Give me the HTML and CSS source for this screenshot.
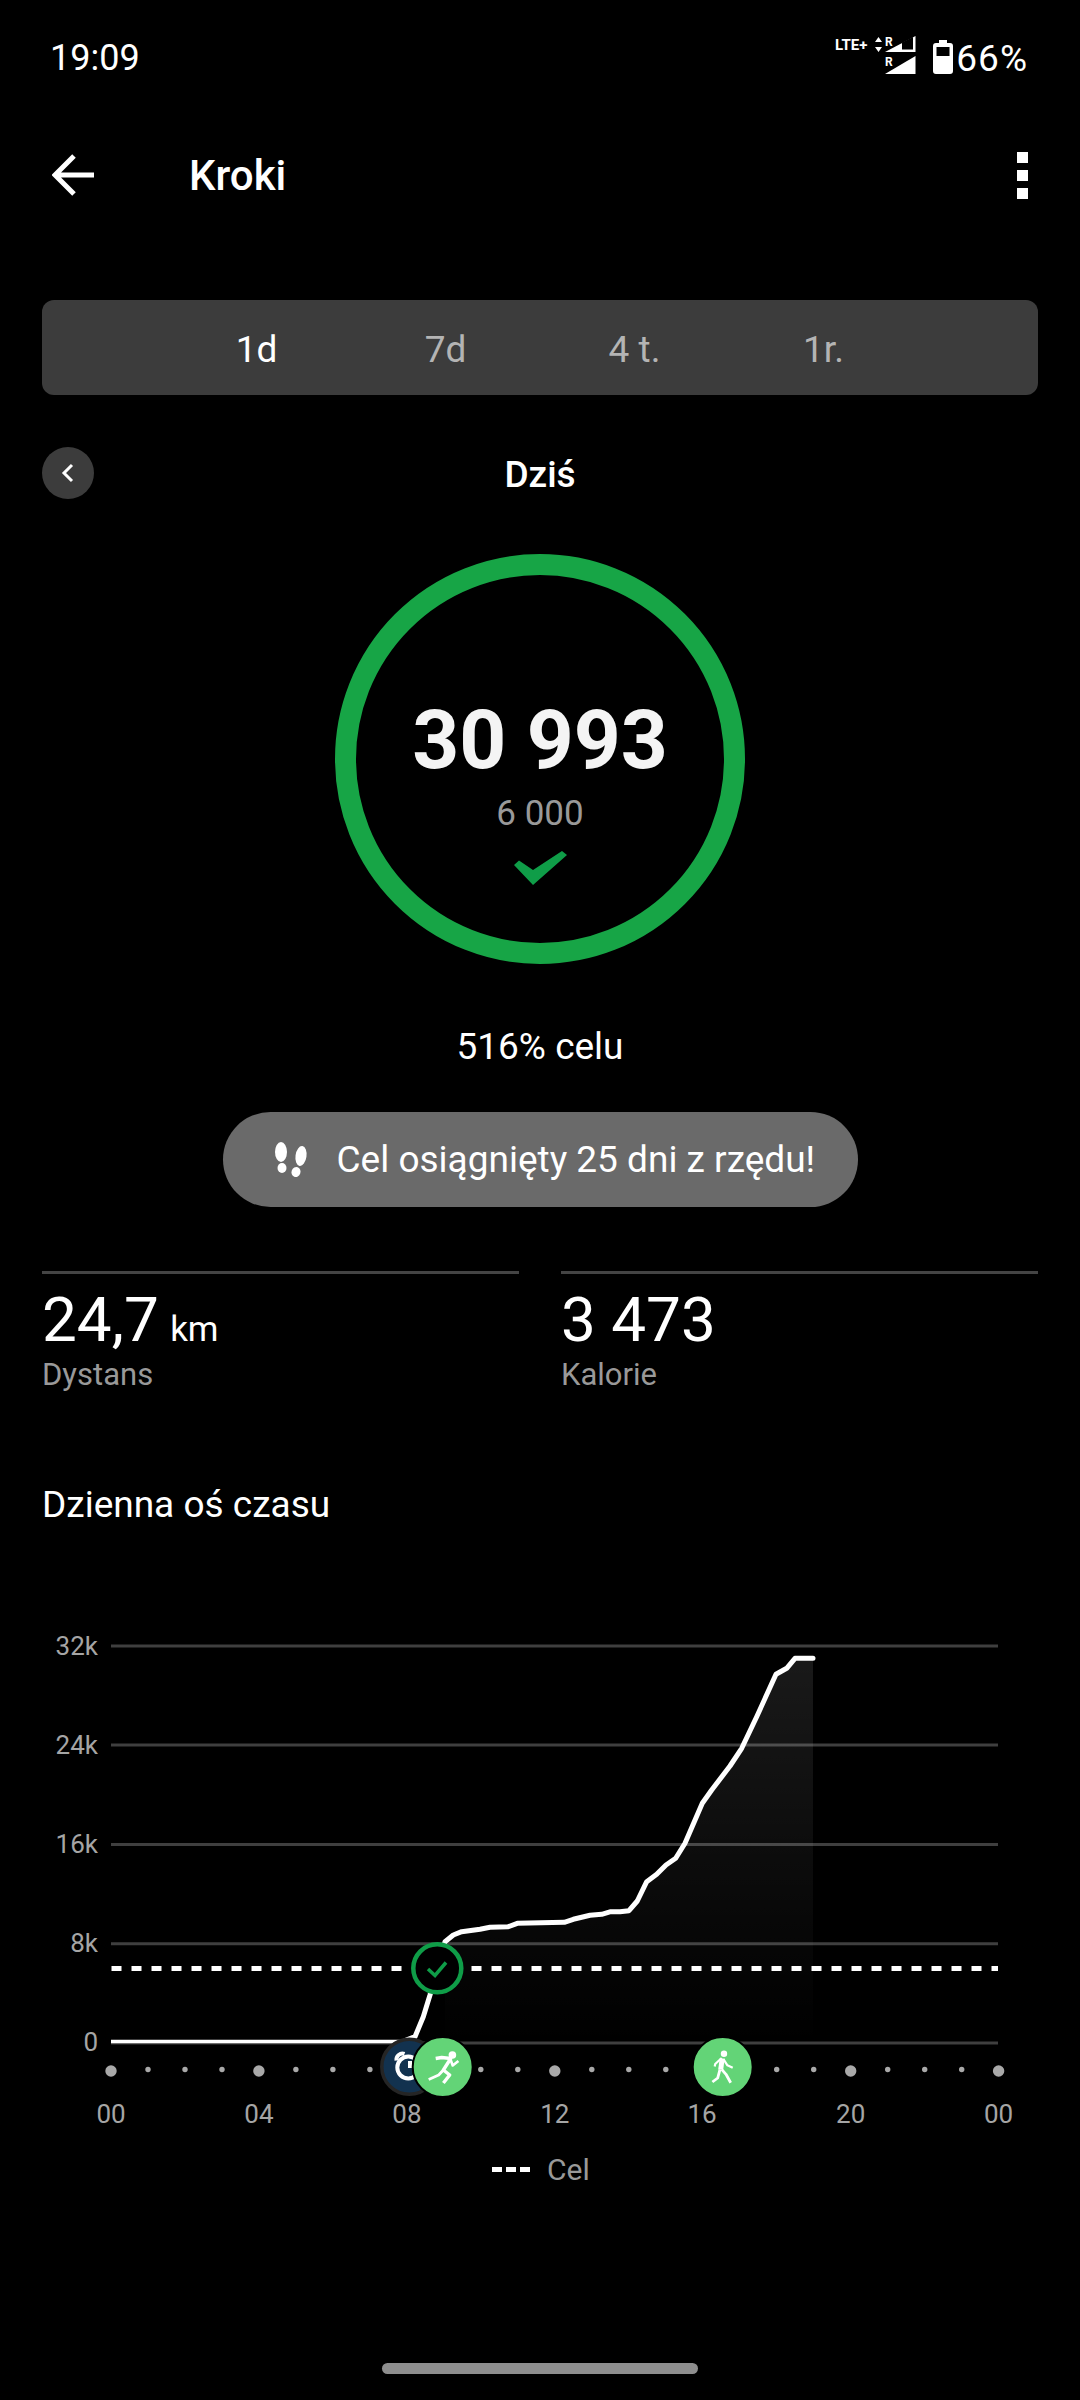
FILE: index.html
```html
<!DOCTYPE html>
<html lang="pl">
<head>
    <meta charset="UTF-8">
    <meta name="viewport" content="width=device-width, initial-scale=1.0">
    <title>Kroki</title>
    <link rel="stylesheet" href="styles.css">
</head>
<body>
    <div class="status-bar">
        <span class="clock">19:09</span>
        <div class="status-icons">
            <svg class="signal" width="84" height="40" viewBox="830 38 84 40">
                <text class="signal-text" x="832" y="52">LTE+</text>
                <path d="M875.5 39l3.5 5h-7zM875.5 54l3.5-5h-7z" fill="#fff"/>
                <text class="signal-small" x="882" y="48">R</text>
                <path d="M882 54l30.5-16v16z" fill="#fff"/>
                <path d="M899 51.5v-7l11-5.5v12.500z" fill="#000"/>
                <text class="signal-small" x="882" y="68">R</text>
                <path d="M882 76l30.500-18v18z" fill="#fff"/>
            </svg>
            <svg class="battery" width="20" height="34" viewBox="0 0 20 34">
                <path d="M6 0h8v3h3a3 3 0 0 1 3 3v25a3 3 0 0 1-3 3H3a3 3 0 0 1-3-3V6a3 3 0 0 1 3-3h3z" fill="#fff"/>
                <rect x="3.500" y="7" width="13" height="9" fill="#000"/>
            </svg>
            <span class="battery-level">66%</span>
        </div>
    </div>

    <div class="toolbar">
        <svg width="44" height="42" viewBox="0 0 44 42">
            <path d="M22 2L3 21l19 19M3 21h39" fill="none" stroke="#fff" stroke-width="5"/>
        </svg>
        <h1 class="toolbar-title">Kroki</h1>
        <div class="more-menu">
            <span></span>
            <span></span>
            <span></span>
        </div>
    </div>

    <div class="tabs">
        <span class="tab tab-active">1d</span>
        <span class="tab">7d</span>
        <span class="tab">4 t.</span>
        <span class="tab">1r.</span>
    </div>

    <div class="date-row">
        <div class="date-prev">
            <svg width="14" height="20" viewBox="0 0 14 20">
                <path d="M11 2L3 10l8 8" fill="none" stroke="#fff" stroke-width="3"/>
            </svg>
        </div>
        <div class="date-label">Dziś</div>
    </div>

    <div class="ring">
        <div class="ring-steps">30 993</div>
        <div class="ring-goal">6 000</div>
        <svg class="ring-check" width="53" height="34" viewBox="0 0 53 34">
            <path d="M0 14l5-4.500 14 9.500L48 0l5 4-34 30z" fill="#0f9d48"/>
        </svg>
    </div>

    <div class="goal-percent">516% celu</div>

    <div class="streak">
        <svg width="36" height="40" viewBox="0 0 36 40">
            <ellipse cx="7" cy="12" rx="6" ry="10" fill="#fff"/>
            <ellipse cx="8" cy="28" rx="4.500" ry="5" fill="#fff"/>
            <ellipse cx="27" cy="16" rx="5.500" ry="10" transform="rotate(8 27 16)" fill="#fff"/>
            <ellipse cx="22" cy="32" rx="4.500" ry="5" transform="rotate(20 22 32)" fill="#fff"/>
        </svg>
        <span class="streak-text">Cel osiągnięty 25 dni z rzędu!</span>
    </div>

    <div class="stats">
        <div class="stat">
            <div class="stat-value">24,7 <small>km</small></div>
            <div class="stat-label">Dystans</div>
        </div>
        <div class="stat">
            <div class="stat-value">3 473</div>
            <div class="stat-label">Kalorie</div>
        </div>
    </div>

    <h2 class="section-title">Dzienna oś czasu</h2>

    <svg class="chart" width="1080" height="600" viewBox="0 1600 1080 600">
        <defs>
            <linearGradient id="areaFill" x1="0" y1="0" x2="0" y2="1">
                <stop offset="0" stop-color="#fff" stop-opacity="0.1"/>
                <stop offset="1" stop-color="#fff" stop-opacity="0"/>
            </linearGradient>
        </defs>

        <!-- grid -->
        <g stroke="#3f3f3f" stroke-width="3">
            <path d="M111 1646H998M111 1745H998M111 1844.500H998M111 1943.700H998M111 2043H998"/>
        </g>
        <g class="axis-label" text-anchor="end">
            <text x="98" y="1655">32k</text>
            <text x="98" y="1754">24k</text>
            <text x="98" y="1853">16k</text>
            <text x="98" y="1952">8k</text>
            <text x="98" y="2051">0</text>
        </g>

        <!-- steps area and line -->
        <path fill="url(#areaFill)" d="M445 1941.700L453.300 1935L461.700 1931.700L480 1929.300L490 1927.300L508.300 1926.700L517.300 1923.300L564.300 1922.300L573.300 1919.300L590 1915.300L601.700 1914.300L610.700 1911.700L620 1911.700L629 1910.700L637.300 1901L646.700 1881.700L656.700 1874.300L666 1865L675.700 1858.300L685 1843.300L702.300 1803.300L711.700 1790L730 1766L741.700 1748.300L756.700 1716.700L776 1674.300L786.700 1668.300L795 1658.300L813 1658.300V2043H445z"/>
        <path fill="none" stroke="#fff" stroke-width="3.500" d="M111 2041.500H405"/>
        <path fill="none" stroke="#fff" stroke-width="5" stroke-linejoin="round" stroke-linecap="round" d="M405 2040.500L415 2036.700L423.300 2016.700L430 1995L437 1968L445 1941.700L453.300 1935L461.700 1931.700L480 1929.300L490 1927.300L508.300 1926.700L517.300 1923.300L564.300 1922.300L573.300 1919.300L590 1915.300L601.700 1914.300L610.700 1911.700L620 1911.700L629 1910.700L637.300 1901L646.700 1881.700L656.700 1874.300L666 1865L675.700 1858.300L685 1843.300L702.300 1803.300L711.700 1790L730 1766L741.700 1748.300L756.700 1716.700L776 1674.300L786.700 1668.300L795 1658.300L813 1658.300"/>

        <!-- goal line -->
        <path d="M111.500 1968.500H402M471.500 1968.500H998" stroke="#fff" stroke-width="5" stroke-dasharray="10 10"/>
        <circle cx="437.300" cy="1968.300" r="24" fill="#000" stroke="#0f9d48" stroke-width="4.500"/>
        <path d="M428 1969l7 6.500 11-13" fill="none" stroke="#0f9d48" stroke-width="3.500"/>

        <!-- hour dots -->
        <g fill="#a9a9a9">
            <circle cx="111" cy="2071" r="5.700"/>
            <circle cx="148" cy="2069.500" r="2.700"/>
            <circle cx="185" cy="2069.500" r="2.700"/>
            <circle cx="222" cy="2069.500" r="2.700"/>
            <circle cx="258.900" cy="2071" r="5.700"/>
            <circle cx="295.900" cy="2069.500" r="2.700"/>
            <circle cx="332.900" cy="2069.500" r="2.700"/>
            <circle cx="369.900" cy="2069.500" r="2.700"/>
            <circle cx="480.800" cy="2069.500" r="2.700"/>
            <circle cx="517.800" cy="2069.500" r="2.700"/>
            <circle cx="554.800" cy="2071" r="5.700"/>
            <circle cx="591.800" cy="2069.500" r="2.700"/>
            <circle cx="628.800" cy="2069.500" r="2.700"/>
            <circle cx="665.800" cy="2069.500" r="2.700"/>
            <circle cx="776.700" cy="2069.500" r="2.700"/>
            <circle cx="813.700" cy="2069.500" r="2.700"/>
            <circle cx="850.700" cy="2071" r="5.700"/>
            <circle cx="887.700" cy="2069.500" r="2.700"/>
            <circle cx="924.700" cy="2069.500" r="2.700"/>
            <circle cx="961.700" cy="2069.500" r="2.700"/>
            <circle cx="998.600" cy="2071" r="5.700"/>
        </g>
        <g class="axis-label" text-anchor="middle">
            <text x="111" y="2123">00</text>
            <text x="258.900" y="2123">04</text>
            <text x="406.900" y="2123">08</text>
            <text x="554.800" y="2123">12</text>
            <text x="702" y="2123">16</text>
            <text x="850.700" y="2123">20</text>
            <text x="998.600" y="2123">00</text>
        </g>

        <!-- alarm marker -->
        <circle cx="409.300" cy="2066.700" r="27.500" fill="#12324f" stroke="#252525" stroke-width="3.500"/>
        <g fill="none" stroke="#fff" stroke-width="4">
            <circle cx="408.300" cy="2067.500" r="11"/>
            <path d="M396.500 2060.500a6 6 0 0 1 8-6.500"/>
            <path d="M410 2061v7"/>
        </g>

        <!-- run marker -->
        <g transform="translate(442.700 2067)">
            <circle r="30" fill="#63d477" stroke="#000" stroke-width="2"/>
            <circle cx="9.700" cy="-12" r="3.800" fill="#fff"/>
            <g fill="none" stroke="#fff" stroke-width="3.200" stroke-linejoin="round">
                <path d="M-7 -8.500L-1 -9.500L8 -8.500L0.700 3L7 8L0.700 16" stroke-width="3.400"/>
                <path d="M8 -7L10 -1.500L15.700 -6" stroke-width="2.600"/>
                <path d="M0.700 3L-4 8L-14 12.500" stroke-width="2.800"/>
            </g>
        </g>

        <!-- walk marker -->
        <g transform="translate(722.700 2067)">
            <circle r="30" fill="#63d477" stroke="#000" stroke-width="2"/>
            <circle cx="1.300" cy="-13.300" r="3.200" fill="#fff"/>
            <g fill="none" stroke="#fff" stroke-linejoin="round">
                <path d="M-0.500 -8.500L-2 2.500" stroke-width="5"/>
                <path d="M-1 -9L-7.500 -3L-8 -0.500" stroke-width="2.200"/>
                <path d="M0.700 -8L4.700 -1.700L10 0.700" stroke-width="2.200"/>
                <path d="M-2.700 2.300L-5 11L-10.300 15" stroke-width="2.800"/>
                <path d="M-1 2.300L3.300 7.300L8 15.700" stroke-width="2.800"/>
            </g>
        </g>

        <!-- legend -->
        <path d="M492 2169.500H530" stroke="#fff" stroke-width="5" stroke-dasharray="10 4"/>
        <text class="legend-label" x="547" y="2180">Cel</text>
    </svg>

    <div class="nav-handle"></div>
</body>
</html>
```

FILE: styles.css
```css
body {
    margin: 0;
    width: 1080px;
    height: 2400px;
    overflow: hidden;
    background-color: #000;
    color: #fff;
    font-family: Roboto, "Noto Sans", sans-serif;
}

.status-bar {
    height: 114px;
    display: flex;
    justify-content: space-between;
    align-items: center;
    padding: 0 52px 0 50px;
}

.clock {
    font-size: 36px;
    padding-top: 2px;
}

.status-icons {
    display: flex;
    align-items: center;
}

.signal {
    margin-top: -2px;
    margin-right: 16px;
}

.signal-text {
    font-size: 15px;
    font-weight: 700;
    fill: #fff;
}

.signal-small {
    font-size: 12px;
    font-weight: 700;
    fill: #fff;
}

.battery {
    margin-top: -1px;
    margin-right: 3px;
}

.battery-level {
    font-size: 37px;
    letter-spacing: 1px;
    padding-top: 2px;
}

.toolbar {
    height: 122px;
    display: flex;
    align-items: center;
    padding: 0 52px;
}

.toolbar-title {
    margin: 0 0 0 93px;
    font-size: 42px;
    font-weight: 500;
    flex: 1;
}

.more-menu {
    display: flex;
    flex-direction: column;
    gap: 7px;
}

.more-menu span {
    width: 11px;
    height: 11px;
    background-color: #fff;
}

.tabs {
    height: 95px;
    box-sizing: border-box;
    padding-top: 3px;
    margin: 64px 42px 0;
    display: flex;
    justify-content: center;
    align-items: center;
    background-color: #3c3c3c;
    border-radius: 12px;
}

.tab {
    width: 189px;
    text-align: center;
    font-size: 37px;
    color: #b4b4b4;
}

.tab-active {
    color: #fff;
}

.date-row {
    height: 52px;
    margin: 52px 42px 0;
    display: grid;
    grid-template-columns: 52px 1fr 52px;
    align-items: center;
}

.date-prev {
    width: 52px;
    height: 52px;
    display: flex;
    justify-content: center;
    align-items: center;
    background-color: #3c3c3c;
    border-radius: 50%;
}

.date-label {
    padding-top: 2px;
    text-align: center;
    font-size: 37px;
    font-weight: 500;
}

.ring {
    width: 410px;
    height: 410px;
    box-sizing: border-box;
    margin: 55px auto 0;
    padding-top: 117px;
    border: 21px solid #17a546;
    border-radius: 50%;
    display: flex;
    flex-direction: column;
    align-items: center;
}

.ring-steps {
    font-size: 82px;
    font-weight: 700;
    line-height: 96px;
    color: #f4f4f4;
}

.ring-goal {
    margin-top: 6px;
    font-size: 35px;
    line-height: 40px;
    color: #999;
}

.ring-check {
    display: block;
    margin-top: 17px;
}

.goal-percent {
    margin-top: 62px;
    text-align: center;
    font-size: 37px;
    line-height: 42px;
}

.streak {
    width: 635px;
    height: 95px;
    box-sizing: border-box;
    margin: 44px auto 0;
    padding-left: 51px;
    display: flex;
    align-items: center;
    gap: 27px;
    background-color: #6a6a6a;
    border-radius: 48px;
}

.streak-text {
    font-size: 37px;
}

.stats {
    margin-top: 64px;
    padding: 0 42px;
    display: flex;
    gap: 42px;
}

.stat {
    flex: 1;
    padding-top: 12px;
    border-top: 3px solid #444;
}

.stat-value {
    font-size: 62px;
    line-height: 68px;
    height: 68px;
}

.stat-value small {
    font-size: 35px;
    line-height: 1;
    margin-left: -4px;
}

.stat-label {
    font-size: 31px;
    line-height: 42px;
    color: #999;
}

.section-title {
    margin: 87px 0 0 42px;
    font-size: 37px;
    font-weight: 400;
    line-height: 44px;
}

.chart {
    display: block;
    margin-top: 73px;
}

.axis-label {
    font-size: 26px;
    fill: #a5a5a5;
}

.legend-label {
    font-size: 30px;
    fill: #999;
}

.nav-handle {
    width: 316px;
    height: 11px;
    margin: 163px 0 0 382px;
    background-color: #8e8e8e;
    border-radius: 6px;
}
```
